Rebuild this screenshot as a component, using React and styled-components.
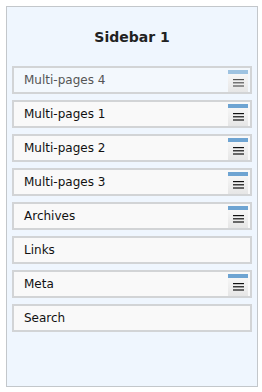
import React from 'react';
import styled, { createGlobalStyle } from 'styled-components';

const GlobalStyle = createGlobalStyle`
  html, body {
    margin: 0;
    padding: 0;
    background: #ffffff;
  }
  body {
    padding: 6px 5px 5px 6px;
    font-family: "DejaVu Sans", Verdana, sans-serif;
  }
`;

const Panel = styled.div`
  box-sizing: border-box;
  width: 252px;
  height: 381px;
  border: 1px solid #c3c7cb;
  background: #eff6fe;
  padding: 0 5px;
`;

const Title = styled.h2`
  margin: 20px 0 19px;
  height: 20px;
  line-height: 20px;
  font-size: 14px;
  font-weight: bold;
  text-align: center;
  color: #222222;
`;

const List = styled.div`
  display: flex;
  flex-direction: column;
  gap: 6px;
`;

const Row = styled.div`
  box-sizing: border-box;
  height: 28px;
  display: flex;
  align-items: stretch;
  border: 2px solid #d2d4d6;
  background: ${(p) => (p.$faded ? '#f3f8fd' : '#f9f9f9')};
`;

const Label = styled.span`
  flex: 1;
  padding-left: 10px;
  line-height: 24px;
  font-size: 12px;
  color: ${(p) => (p.$faded ? '#555555' : '#111111')};
`;

const Handle = styled.div`
  width: 20px;
  margin: 2px 2px 0 0;
  display: flex;
  flex-direction: column;
`;

const HandleBar = styled.div`
  height: 4px;
  background: ${(p) => (p.$faded ? '#9ec3e1' : '#6ea4d2')};
`;

const HandleBox = styled.div`
  flex: 1;
  display: flex;
  align-items: center;
  justify-content: center;
  background: linear-gradient(#f6f6f6, #e6e6e6);
`;

const items = [
  { name: 'Multi-pages 4', handle: true, faded: true },
  { name: 'Multi-pages 1', handle: true },
  { name: 'Multi-pages 2', handle: true },
  { name: 'Multi-pages 3', handle: true },
  { name: 'Archives', handle: true },
  { name: 'Links' },
  { name: 'Meta', handle: true },
  { name: 'Search' },
];

function Lines({ color }) {
  return (
    <svg width="11" height="8" viewBox="0 0 11 8">
      <rect x="0" y="0" width="11" height="1.2" fill={color} />
      <rect x="0" y="3.2" width="11" height="1.2" fill={color} />
      <rect x="0" y="6.4" width="11" height="1.2" fill={color} />
    </svg>
  );
}

export default function App() {
  return (
    <>
      <GlobalStyle />
      <Panel>
        <Title>Sidebar 1</Title>
        <List>
          {items.map((it) => (
            <Row key={it.name} $faded={it.faded}>
              <Label $faded={it.faded}>{it.name}</Label>
              {it.handle && (
                <Handle>
                  <HandleBar $faded={it.faded} />
                  <HandleBox>
                    <Lines color={it.faded ? '#555555' : '#111111'} />
                  </HandleBox>
                </Handle>
              )}
            </Row>
          ))}
        </List>
      </Panel>
    </>
  );
}
